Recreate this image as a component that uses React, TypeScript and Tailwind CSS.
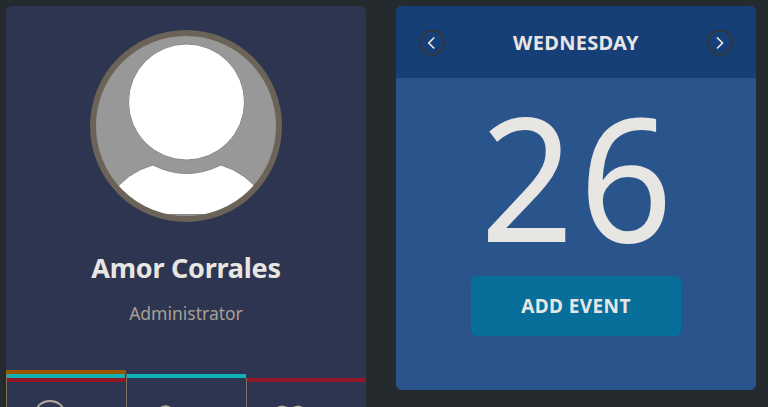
function Avatar() {
  return (
    <svg viewBox="0 0 192 192" className="size-48 shrink-0" aria-label="Profile photo">
      <defs>
        <clipPath id="photo">
          <circle cx="96" cy="96" r="90.5" />
        </clipPath>
      </defs>
      <circle cx="96" cy="96" r="92" fill="#989898" />
      <g clipPath="url(#photo)" fill="#fff" stroke="#878787" strokeWidth="1">
        <circle cx="96.5" cy="72" r="58" />
        <path d="M20 166 Q37 142 63 135 Q96.500 152 131 135 Q157 143 173 166 V184.500 H20 Z" />
      </g>
      <circle cx="96" cy="96" r="93" fill="none" stroke="#6b6358" strokeWidth="6" />
    </svg>
  )
}

function ProfileCard() {
  return (
    <section className="flex h-[401px] w-[360px] shrink-0 flex-col items-center rounded-t-[6px] bg-[#2e3550] pt-6">
      <Avatar />
      <h1 className="mt-[28px] h-9 whitespace-nowrap text-[27px] leading-9 font-bold tracking-[-0.25px] text-[#e8e6e3]">
        Amor Corrales
      </h1>
      <p className="mt-[15px] h-6 whitespace-nowrap text-[17.500px] leading-6 text-[#a8a095]">
        Administrator
      </p>
      <div className="mt-auto flex h-[37px] w-full items-end">
        <div className="h-[37px] w-[120px] border-l border-[#7c705f] bg-[#2e3550]">
          <div className="-ml-px h-1 w-[120px] bg-[#9a5700]" />
          <div className="h-1 w-[118px] bg-[#12b2b5]" />
          <div className="h-1 w-[118px] bg-[#911627]" />
          <svg width="118" height="25" fill="none" stroke="#b2aa9e" strokeWidth="2">
            <ellipse cx="43" cy="29.500" rx="13.500" ry="10.500" />
          </svg>
        </div>
        <div className="h-[33px] w-[120px] border-l border-[#7c705f]">
          <div className="h-1 w-[119px] bg-[#12b2b5]" />
          <svg width="119" height="29" fill="none" stroke="#b2aa9e" strokeWidth="2">
            <circle cx="38.500" cy="36.300" r="8" />
          </svg>
        </div>
        <div className="h-[29px] w-[120px] border-l border-[#7c705f]">
          <div className="h-1 w-[118.500px] bg-[#911627]" />
          <svg width="119" height="25" fill="none" stroke="#b2aa9e" strokeWidth="2">
            <path d="M43 30 C39 22.500 30 22.500 29 30 M43 30 C47 22.500 56 22.500 57 30" />
          </svg>
        </div>
      </div>
    </section>
  )
}

function ArrowButton({ direction }: { direction: 'previous' | 'next' }) {
  return (
    <button aria-label={direction} className="size-[26px]">
      <svg viewBox="0 0 26 26" className="size-[26px] overflow-visible" fill="none">
        <circle cx="13" cy="13.500" r="12" stroke="#32373b" strokeWidth="2" />
        <path
          d={direction === 'previous' ? 'M15.300 8.500 L9.800 14 L15.300 19.500' : 'M10 8.500 L15.500 14 L10 19.500'}
          stroke="#e8e6e3"
          strokeWidth="1.700"
        />
      </svg>
    </button>
  )
}

function CalendarCard() {
  return (
    <section className="flex h-96 w-[360px] shrink-0 flex-col overflow-hidden rounded-[6px] bg-[#2a548c]">
      <header className="flex h-[72px] shrink-0 items-center justify-between bg-[#163f77] px-[23px]">
        <ArrowButton direction="previous" />
        <h2 className="pt-0.5 whitespace-nowrap text-[20px] leading-6 font-bold tracking-[0.3px] text-[#e8e6e3]">
          WEDNESDAY
        </h2>
        <ArrowButton direction="next" />
      </header>
      <div className="flex h-[198px] shrink-0 scale-x-95 items-center justify-center pb-[3px] pl-[7px] text-[172px] leading-[195px] tracking-[6px] text-[#e8e6e3]">
        26
      </div>
      <button className="mx-auto h-[60px] w-[210px] shrink-0 rounded-[6px] bg-[#086e9a] text-[19px] font-bold tracking-[0.4px] text-[#e8e6e3]">
        ADD EVENT
      </button>
    </section>
  )
}

export default function App() {
  return (
    <main className="flex h-[407px] w-[768px] items-start gap-[30px] overflow-hidden bg-[#242a2d] pt-1.5 pl-1.5 font-['Noto_Sans',sans-serif]">
      <ProfileCard />
      <CalendarCard />
    </main>
  )
}
